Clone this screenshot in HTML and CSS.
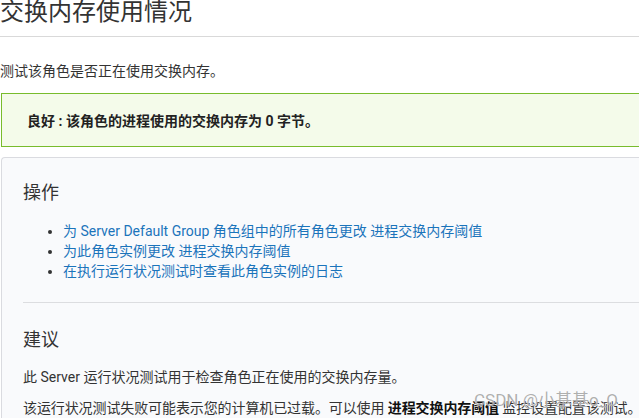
FILE: index.html
```html
<!DOCTYPE html>
<html lang="zh-CN">
<head>
    <meta charset="UTF-8">
    <meta name="viewport" content="width=device-width, initial-scale=1.0">
    <title>交换内存使用情况</title>

    <link rel="stylesheet" href="styles.css">
</head>
<body>

    <!-- title section -->
    <h1 class="title">交换内存使用情况</h1>

    <p class="desc">测试该角色是否正在使用交换内存。</p>

    <div class="alert">
        <b>良好 : 该角色的进程使用的交换内存为 0 字节。</b>
    </div>

    <div class="panel">
        <section class="block">
            <h2>操作</h2>
            <ul>
                <li><a href="#">为 Server Default Group 角色组中的所有角色更改 进程交换内存阈值</a></li>
                <li><a href="#">为此角色实例更改 进程交换内存阈值</a></li>
                <li><a href="#">在执行运行状况测试时查看此角色实例的日志</a></li>
            </ul>
        </section>

        <section class="block advice">
            <h2>建议</h2>
            <p>此 Server 运行状况测试用于检查角色正在使用的交换内存量。</p>
            <p>该运行状况测试失败可能表示您的计算机已过载。可以使用 <b>进程交换内存阈值</b> 监控设置配置该测试。</p>
        </section>
    </div>

    <span class="watermark">CSDN @小基基o_O</span>

</body>
</html>
```

FILE: styles.css
```css
* {
    padding: 0;
    margin: 0;
    box-sizing: border-box;
    font-family: Roboto, "Noto Sans CJK SC", sans-serif;
}

body {
    color: #333;
    font-size: 14px;
    background-color: #fff;
    overflow: hidden;
}

.title {
    font-size: 24px;
    font-weight: 400;
    line-height: 28px;
    margin-top: -2px;
    padding-bottom: 10px;
    border-bottom: 1px solid #d9d9d9;
}

.desc {
    line-height: 20px;
    margin-top: 24px;
}

.alert {
    margin: 12px 0 0 1px;
    height: 54px;
    display: flex;
    align-items: center;
    padding-left: 25px;
    background-color: #f4fbea;
    border: 1px solid #78bc2c;
    border-right: none;

    b {
        color: #222;
        font-weight: 700;
    }
}

.panel {
    margin: 10px 0 0 1px;
    padding: 0 0 0 21px;
    background-color: #f9fafc;
    border: 1px solid #dadbe0;
    border-right: none;
    border-radius: 4px 0 0 0;
    overflow: hidden;
}

.block {
    padding-top: 22px;
    padding-bottom: 21px;

    h2 {
        font-size: 18px;
        font-weight: 400;
        line-height: 26px;
        color: #333;
    }

    ul {
        margin-top: 15px;
        padding-left: 40px;

        li {
            line-height: 20px;
        }

        a {
            color: #1b74bb;
            text-decoration: none;
        }
    }
}

.advice {
    padding-top: 24px;
    border-top: 1px solid #dcdde0;

    p {
        line-height: 20px;
        margin-top: 14px;
        white-space: nowrap;
    }

    p + p {
        margin-top: 11px;
        letter-spacing: -0.1px;
    }

    b {
        color: #111;
    }
}

.watermark {
    position: absolute;
    z-index: 2;
    left: 474px;
    top: 388px;
    font-size: 17px;
    line-height: 24px;
    color: rgba(140, 140, 140, 0.7);
    text-shadow: 0 0 1px #fff;
    white-space: nowrap;
}
```
